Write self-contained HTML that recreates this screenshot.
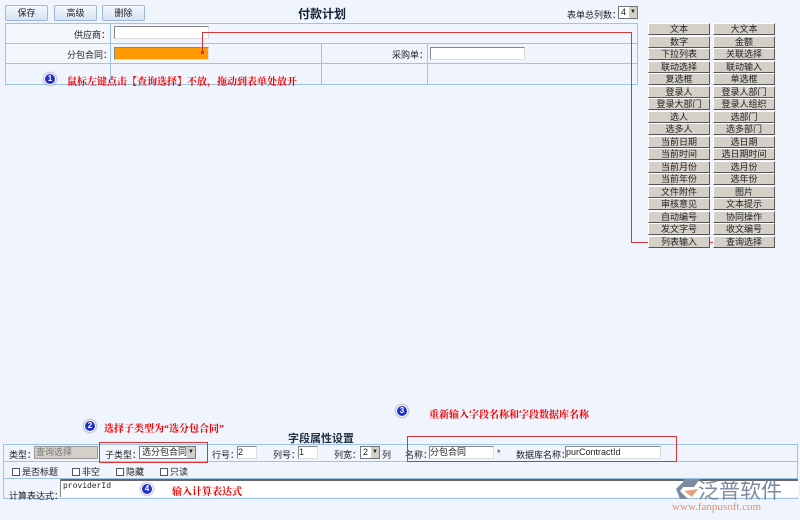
<!DOCTYPE html>
<html><head><meta charset="utf-8"><style>
*{margin:0;padding:0;box-sizing:border-box}
body{width:800px;height:520px;background:#f0f4fd;font-family:"Liberation Sans","Noto Sans CJK SC",sans-serif;font-size:9px;color:#222;position:relative;overflow:hidden}
.a{position:absolute}
.btn{position:absolute;top:5px;height:16px;width:43px;border:1px solid #9db8da;background:linear-gradient(#f4f8fe,#d6e3f5);font-size:9px;text-align:center;line-height:14px;border-radius:2px}
.ln{position:absolute;background:#9ec3e6}
.inp{position:absolute;background:#fff;border:1px solid #888;border-right-color:#ddd;border-bottom-color:#ddd;height:13px}
.gb{position:absolute;width:62px;height:12px;background:#d4d0c8;border:1px solid #fff;border-right-color:#555;border-bottom-color:#555;font-size:9px;text-align:center;line-height:10px}
.red{color:#e00;font-weight:bold;font-size:10px;font-family:"Liberation Serif","Noto Serif CJK SC",serif}
.num{position:absolute;width:12px;height:12px;border-radius:50%;background:#1f2fd0;border:1px solid #fff;box-shadow:0 0 2px #555;color:#fff;font-size:8px;font-weight:bold;text-align:center;line-height:10px}
.rl{position:absolute;background:#d33}
.cb{display:inline-block;width:8px;height:8px;border:1px solid #555;background:#fff;vertical-align:-1px;margin-right:2px}
</style></head><body>
<div class="btn" style="left:5px">保存</div>
<div class="btn" style="left:54px">高级</div>
<div class="btn" style="left:102px">删除</div>
<div class="a" style="left:298px;top:5px;font-size:12px;font-weight:bold;color:#123">付款计划</div>
<div class="a" style="left:567px;top:8px">表单总列数：</div>
<div class="a" style="left:618px;top:6px;width:20px;height:13px;background:#fff;border:1px solid #777;font-size:9px;line-height:11px;padding-left:2px">4<span style="position:absolute;right:0;top:0;width:8px;height:11px;background:#d4d0c8;font-size:6px;text-align:center">▼</span></div>

<!-- top table -->
<div class="a" style="left:5px;top:23px;width:633px;height:62px;border:1px solid #9ec3e6;background:#f0f4fd"></div>
<div class="a" style="left:6px;top:24px;width:104px;height:39px;background:#f3f6fb"></div>
<div class="ln" style="left:5px;top:43px;width:633px;height:1px"></div>
<div class="ln" style="left:5px;top:63px;width:633px;height:1px"></div>
<div class="ln" style="left:110px;top:23px;width:1px;height:62px"></div>
<div class="ln" style="left:321px;top:43px;width:1px;height:42px"></div>
<div class="ln" style="left:427px;top:43px;width:1px;height:42px"></div>
<div class="a" style="left:74px;top:28px">供应商：</div>
<div class="a" style="left:67px;top:48px">分包合同：</div>
<div class="a" style="left:392px;top:48px">采购单：</div>
<div class="inp" style="left:114px;top:26px;width:95px"></div>
<div class="inp" style="left:114px;top:47px;width:95px;background:#f90"></div>
<div class="inp" style="left:430px;top:47px;width:95px"></div>
<div class="num" style="left:44px;top:73px">1</div>
<div class="a red" style="left:67px;top:73px">鼠标左键点击【查询选择】不放，拖动到表单处放开</div>

<!-- red path -->
<div class="rl" style="left:202px;top:32px;width:1px;height:21px"></div>
<div class="rl" style="left:202px;top:32px;width:430px;height:1px"></div>
<div class="rl" style="left:631px;top:32px;width:1px;height:211px"></div>
<div class="rl" style="left:631px;top:242px;width:93px;height:1px"></div>
<div class="rl" style="left:201px;top:51px;width:3px;height:3px"></div>
<div class="rl" style="left:723px;top:241px;width:3px;height:3px"></div>

<!-- grid buttons -->
<div id="g"></div>
<script>
var L=["文本","数字","下拉列表","联动选择","复选框","登录人","登录大部门","选人","选多人","当前日期","当前时间","当前月份","当前年份","文件附件","审核意见","自动编号","发文字号","列表输入"];
var R=["大文本","金额","关联选择","联动输入","单选框","登录人部门","登录人组织","选部门","选多部门","选日期","选日期时间","选月份","选年份","图片","文本提示","协同操作","收文编号","查询选择"];
var h="";for(var i=0;i<18;i++){var t=23+i*12.5;h+='<div class="gb" style="left:648px;top:'+t+'px">'+L[i]+'</div><div class="gb" style="left:713px;top:'+t+'px">'+R[i]+'</div>';}
document.getElementById("g").innerHTML=h;
</script>

<!-- bottom -->
<div class="num" style="left:396px;top:405px">3</div>
<div class="a red" style="left:429px;top:406px">重新输入字段名称和字段数据库名称</div>
<div class="num" style="left:84px;top:420px">2</div>
<div class="a red" style="left:104px;top:420px">选择子类型为“选分包合同”</div>
<div class="a" style="left:288px;top:430px;font-size:11px;font-weight:bold;color:#234">字段属性设置</div>

<div class="a" style="left:3px;top:444px;width:795px;height:55px;border:1px solid #9ec3e6;background:#f0f4fd"></div>
<div class="ln" style="left:3px;top:461px;width:795px;height:1px"></div>
<div class="ln" style="left:3px;top:478px;width:795px;height:1px"></div>
<div class="a" style="left:9px;top:448px">类型：</div>
<div class="a" style="left:34px;top:446px;width:64px;height:13px;background:#d4d0c8;border:1px solid #999;color:#777;padding-left:1px;line-height:11px">查询选择</div>
<div class="a" style="left:105px;top:448px">子类型：</div>
<div class="a" style="left:139px;top:446px;width:57px;height:13px;background:#fff;border:1px solid #777;line-height:11px;padding-left:2px">选分包合同<span style="position:absolute;right:0;top:0;width:8px;height:11px;background:#d4d0c8;font-size:6px;text-align:center">▼</span></div>
<div class="a" style="left:99px;top:442px;width:109px;height:21px;border:1px solid #d33"></div>
<div class="a" style="left:212px;top:448px">行号：</div>
<div class="inp" style="left:237px;top:446px;width:20px;line-height:11px">2</div>
<div class="a" style="left:273px;top:448px">列号：</div>
<div class="inp" style="left:298px;top:446px;width:20px;line-height:11px">1</div>
<div class="a" style="left:334px;top:448px">列宽：</div>
<div class="a" style="left:360px;top:446px;width:20px;height:13px;background:#fff;border:1px solid #777;line-height:11px;padding-left:2px">2<span style="position:absolute;right:0;top:0;width:8px;height:11px;background:#d4d0c8;font-size:6px;text-align:center">▼</span></div>
<div class="a" style="left:382px;top:448px">列</div>
<div class="a" style="left:405px;top:448px">名称：</div>
<div class="inp" style="left:429px;top:446px;width:65px;line-height:11px">分包合同</div>
<div class="a" style="left:497px;top:448px">*</div>
<div class="a" style="left:516px;top:448px">数据库名称：</div>
<div class="inp" style="left:565px;top:446px;width:96px;line-height:11px">purContractId</div>
<div class="a" style="left:407px;top:436px;width:270px;height:26px;border:1px solid #d33"></div>
<div class="a" style="left:12px;top:465px"><span class="cb"></span>是否标题</div>
<div class="a" style="left:72px;top:465px"><span class="cb"></span>非空</div>
<div class="a" style="left:116px;top:465px"><span class="cb"></span>隐藏</div>
<div class="a" style="left:160px;top:465px"><span class="cb"></span>只读</div>
<div class="a" style="left:9px;top:489px">计算表达式：</div>
<div class="a" style="left:60px;top:479px;width:738px;height:18px;background:#fff;border-top:2px solid #666;border-left:1px solid #888;font-family:'Liberation Mono',monospace;font-size:8px;padding:1px 2px">providerId</div>
<div class="num" style="left:141px;top:483px">4</div>
<div class="a red" style="left:172px;top:483px">输入计算表达式</div>

<!-- logo -->
<svg class="a" style="left:670px;top:477px" width="34" height="24" viewBox="0 0 34 24">
<path d="M14 2 L30 2 L24 10 L12 10 Z" fill="#7a8aa3"/>
<path d="M6 12 L16 2 L20 2 L10 14 L18 22 L10 22 Z" fill="#7a8aa3"/>
<path d="M14 14 L28 12 L22 20 Z" fill="#e5a07c"/>
</svg>
<div class="a" style="left:698px;top:475px;font-size:21px;color:#7a8aa3;letter-spacing:0px">泛普软件</div>
<div class="a" style="left:672px;top:501px;font-size:11px;color:#e09070;font-family:'Liberation Serif',serif">www.fanpusoft.com</div>
</body></html>
